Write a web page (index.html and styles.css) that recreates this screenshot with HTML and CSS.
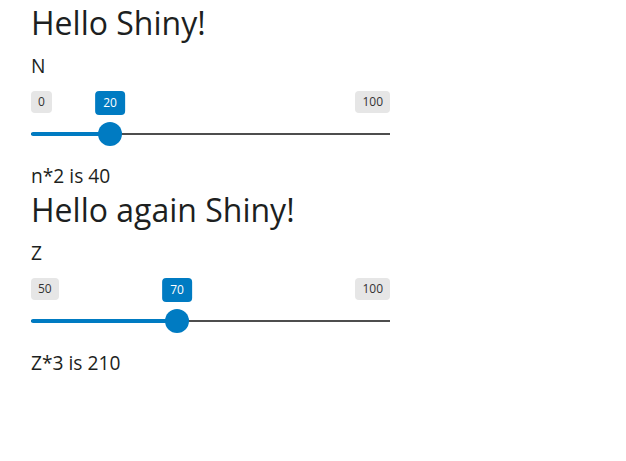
FILE: index.html
```html
<!DOCTYPE html>
<html lang="en">
<head>
<meta charset="utf-8">
<title>Hello Shiny</title>
<link rel="stylesheet" href="styles.css">
</head>
<body>
<main class="page">
  <section class="block">
    <h2 class="title">Hello Shiny!</h2>
    <label class="field-label">N</label>
    <div class="slider" style="--p:20%">
      <div class="limits">
        <span class="badge badge-muted">0</span>
        <span class="badge badge-muted">100</span>
      </div>
      <div class="rail"></div>
      <div class="track">
        <div class="fill"></div>
        <span class="badge badge-value">20</span>
        <span class="handle"></span>
      </div>
    </div>
    <p class="output">n*2 is 40</p>
  </section>
  <section class="block">
    <h2 class="title">Hello again Shiny!</h2>
    <label class="field-label">Z</label>
    <div class="slider" style="--p:40%">
      <div class="limits">
        <span class="badge badge-muted">50</span>
        <span class="badge badge-muted">100</span>
      </div>
      <div class="rail"></div>
      <div class="track">
        <div class="fill"></div>
        <span class="badge badge-value">70</span>
        <span class="handle"></span>
      </div>
    </div>
    <p class="output">Z*3 is 210</p>
  </section>
</main>
</body>
</html>
```

FILE: styles.css
```css
* { box-sizing: border-box; }

html, body {
  margin: 0;
  padding: 0;
  background: #ffffff;
}

body {
  font-family: "Open Sans", "Noto Sans", sans-serif;
  font-size: 19.2px;
  line-height: 1.5;
  color: #1d1f21;
}

.page {
  padding: 4px 31px 0 31px;
}

.block {
  display: flex;
  flex-direction: column;
  align-items: flex-start;
}

.title {
  margin: 0 0 10px 0;
  font-size: 32px;
  line-height: 1.2;
  font-weight: 400;
}

.field-label {
  display: block;
  margin: 0 0 10px 0;
}

.slider {
  position: relative;
  width: 359px;
  height: 57px;
  margin-bottom: 14px;
}

.limits {
  display: flex;
  justify-content: space-between;
  align-items: flex-start;
}

.badge {
  display: inline-block;
  font-size: 12px;
  line-height: 16px;
  border-radius: 4px;
  white-space: nowrap;
}

.badge-muted {
  padding: 3px 7px;
  background: #e6e6e6;
  color: #333333;
}

.badge-value {
  position: absolute;
  top: 0;
  left: var(--p);
  transform: translateX(-50%);
  padding: 4px 8px;
  background: #007bc2;
  color: #ffffff;
}

.rail {
  position: absolute;
  left: 0;
  right: 0;
  top: 42px;
  height: 2px;
  background: #4d4d4d;
}

.track {
  position: absolute;
  left: 12px;
  right: 12px;
  top: 0;
  bottom: 0;
}

.fill {
  position: absolute;
  left: -12px;
  top: 41px;
  height: 4px;
  width: calc(var(--p) + 12px);
  background: #007bc2;
  border-radius: 2px 0 0 2px;
}

.handle {
  position: absolute;
  top: 31px;
  left: var(--p);
  width: 24px;
  height: 24px;
  margin-left: -12px;
  border-radius: 50%;
  background: #007bc2;
}

.output {
  margin: 0;
}
```
